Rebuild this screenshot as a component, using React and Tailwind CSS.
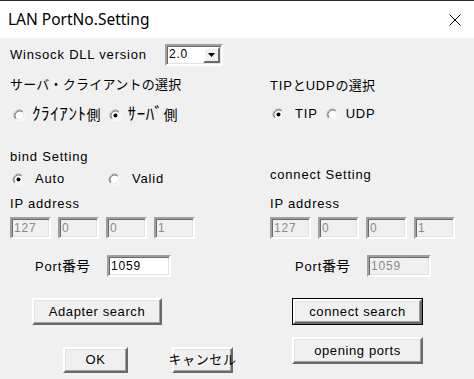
import React from "react";

function Radio({ checked }) {
  return (
    <svg width="13" height="13" viewBox="0 0 13 13" className="shrink-0">
      <circle cx="6.5" cy="6.5" r="5.5" fill="#ffffff" />
      <path d="M2.61 10.39 A5.5 5.5 0 0 1 10.39 2.61" fill="none" stroke="#a0a0a0" strokeWidth="1" />
      <path d="M3.32 9.68 A4.5 4.5 0 0 1 9.68 3.32" fill="none" stroke="#696969" strokeWidth="1" />
      <path d="M10.39 2.61 A5.5 5.5 0 0 1 2.61 10.39" fill="none" stroke="#ffffff" strokeWidth="1" />
      <path d="M9.68 3.32 A4.5 4.5 0 0 1 3.32 9.68" fill="none" stroke="#e3e3e3" strokeWidth="1" />
      {checked && <circle cx="6.5" cy="6.5" r="2" fill="#000000" />}
    </svg>
  );
}

function Field({ value, disabled }) {
  return (
    <div
      className={
        disabled
          ? "h-[22px] w-[41px] border-2 border-t-[#a0a0a0] border-l-[#a0a0a0] border-b-white border-r-white bg-[#f0f0f0] shadow-[inset_1px_1px_0_#696969,inset_-1px_-1px_0_#e3e3e3] pl-[2px] text-[12px] leading-[18px] tracking-[0.8px] text-[#8a8a8a]"
          : "h-[22px] w-[41px] border-2 border-t-[#a0a0a0] border-l-[#a0a0a0] border-b-white border-r-white bg-white shadow-[inset_1px_1px_0_#696969,inset_-1px_-1px_0_#e3e3e3] pl-[2px] text-[12px] leading-[18px] tracking-[0.8px] text-black"
      }
    >
      {value}
    </div>
  );
}

function PortField({ disabled }) {
  return (
    <div
      className={
        disabled
          ? "h-[22px] w-[64px] border-2 border-t-[#a0a0a0] border-l-[#a0a0a0] border-b-white border-r-white bg-[#f0f0f0] shadow-[inset_1px_1px_0_#696969,inset_-1px_-1px_0_#e3e3e3] pl-[2px] text-[12px] leading-[18px] tracking-[0.8px] text-[#8a8a8a]"
          : "h-[22px] w-[64px] border-2 border-t-[#a0a0a0] border-l-[#a0a0a0] border-b-white border-r-white bg-white shadow-[inset_1px_1px_0_#696969,inset_-1px_-1px_0_#e3e3e3] pl-[2px] text-[12px] leading-[18px] tracking-[0.8px] text-black"
      }
    >
      1059
    </div>
  );
}

function Button({ children, className }) {
  return (
    <div
      className={
        "flex items-center justify-center whitespace-nowrap border-2 border-t-white border-l-white border-b-[#696969] border-r-[#696969] bg-[#f0f0f0] shadow-[inset_-1px_-1px_0_#a0a0a0,inset_1px_1px_0_#e3e3e3] text-[13px] tracking-[0.6px] " +
        className
      }
    >
      {children}
    </div>
  );
}

function IPRow() {
  return (
    <div className="flex gap-[7px] mt-[5px]">
      <Field value="127" disabled />
      <Field value="0" disabled />
      <Field value="0" disabled />
      <Field value="1" disabled />
    </div>
  );
}

export default function App() {
  return (
    <div className="w-[474px] h-[379px] overflow-hidden bg-[#f0f0f0] flex flex-col border-t border-[#2b2b2b] text-black font-['Liberation_Sans','Noto_Sans_CJK_JP',sans-serif] text-[13px] tracking-[0.8px]">
      <div className="h-[37px] bg-white flex items-center justify-between pl-[8px] pr-[13px] shrink-0">
        <span className="font-['Noto_Sans',sans-serif] text-[15.5px] tracking-[0px] font-normal text-black">
          LAN PortNo.Setting
        </span>
        <svg width="12" height="12" viewBox="0 0 12 12">
          <path d="M0.5 0.5 L11.5 11.5 M11.5 0.5 L0.5 11.5" stroke="#000" strokeWidth="1" />
        </svg>
      </div>
      <div className="flex pl-[10px]">
        {/* left column */}
        <div className="w-[260px] flex flex-col">
          <div className="mt-[6px] h-[22px] flex items-center">
            <span className="w-[155px]">Winsock DLL version</span>
            <div className="h-[22px] w-[58px] border-2 border-t-[#a0a0a0] border-l-[#a0a0a0] border-b-white border-r-white bg-white shadow-[inset_1px_1px_0_#696969,inset_-1px_-1px_0_#e3e3e3] flex items-stretch">
              <span className="flex-1 pl-[2px] text-[12px] leading-[18px] self-start -mt-[1px]">2.0</span>
              <div className="w-[17px] m-[1px] border-2 border-t-white border-l-white border-b-[#696969] border-r-[#696969] bg-[#f0f0f0] flex items-center justify-center">
                <svg width="7" height="4" viewBox="0 0 7 4">
                  <path d="M0 0 H7 L3.5 4 Z" fill="#000" />
                </svg>
              </div>
            </div>
          </div>
          <div className="mt-[11px] h-[16px] leading-[16px] text-[13px] tracking-[0.25px]">
            サーバ・クライアントの選択
          </div>
          <div className="mt-[14px] h-[16px] flex items-center">
            <div className="ml-[3px]"><Radio /></div>
            <span className="ml-[6px] text-[17px] leading-[16px] tracking-[0.6px]">ｸﾗｲｱﾝﾄ<span className="text-[14px] tracking-[0px]">側</span></span>
            <div className="ml-[8px]"><Radio checked /></div>
            <span className="ml-[6px] text-[17px] leading-[16px] tracking-[0.6px]">ｻｰﾊﾞ<span className="text-[14px] tracking-[0px]">側</span></span>
          </div>
          <div className="mt-[26px] h-[16px] leading-[16px]">bind Setting</div>
          <div className="mt-[6px] h-[16px] flex items-center">
            <div className="ml-[2px]"><Radio checked /></div>
            <span className="ml-[10px] w-[73px]">Auto</span>
            <Radio />
            <span className="ml-[11px]">Valid</span>
          </div>
          <div className="mt-[9px] h-[16px] leading-[16px]">IP address</div>
          <IPRow />
          <div className="mt-[16px] h-[22px] flex items-center pl-[25px]">
            <span className="w-[72px]">Port<span className="text-[14px] tracking-[0px]">番号</span></span>
            <PortField />
          </div>
          <Button className="mt-[21px] ml-[22px] h-[27px] w-[130px]">Adapter search</Button>
          <div className="mt-[22px] flex ml-[53px] gap-[44px]">
            <Button className="h-[26px] w-[65px]">OK</Button>
            <Button className="h-[26px] w-[61px] text-[11px] tracking-[-0.5px]">キャンセル</Button>
          </div>
        </div>
        {/* right column */}
        <div className="flex flex-col">
          <div className="mt-[40px] h-[16px] leading-[16px]">
            TIP<span className="text-[13px] tracking-[0px]">と</span>UDP<span className="text-[13px] tracking-[0.3px]">の選択</span>
          </div>
          <div className="mt-[12px] h-[16px] flex items-center">
            <div className="ml-[2px]"><Radio checked /></div>
            <span className="ml-[10px]">TIP</span>
            <div className="ml-[8px]"><Radio /></div>
            <span className="ml-[7px]">UDP</span>
          </div>
          <div className="mt-[45px] h-[16px] leading-[16px]">connect Setting</div>
          <div className="mt-[13px] h-[16px] leading-[16px]">IP address</div>
          <IPRow />
          <div className="mt-[16px] h-[22px] flex items-center pl-[25px]">
            <span className="w-[72px]">Port<span className="text-[14px] tracking-[0px]">番号</span></span>
            <PortField disabled />
          </div>
          <div className="mt-[21px] ml-[22px] w-[131px] h-[27px] border border-black">
            <Button className="h-full w-full">connect search</Button>
          </div>
          <Button className="mt-[12px] ml-[22px] h-[27px] w-[131px]">opening ports</Button>
        </div>
      </div>
    </div>
  );
}
